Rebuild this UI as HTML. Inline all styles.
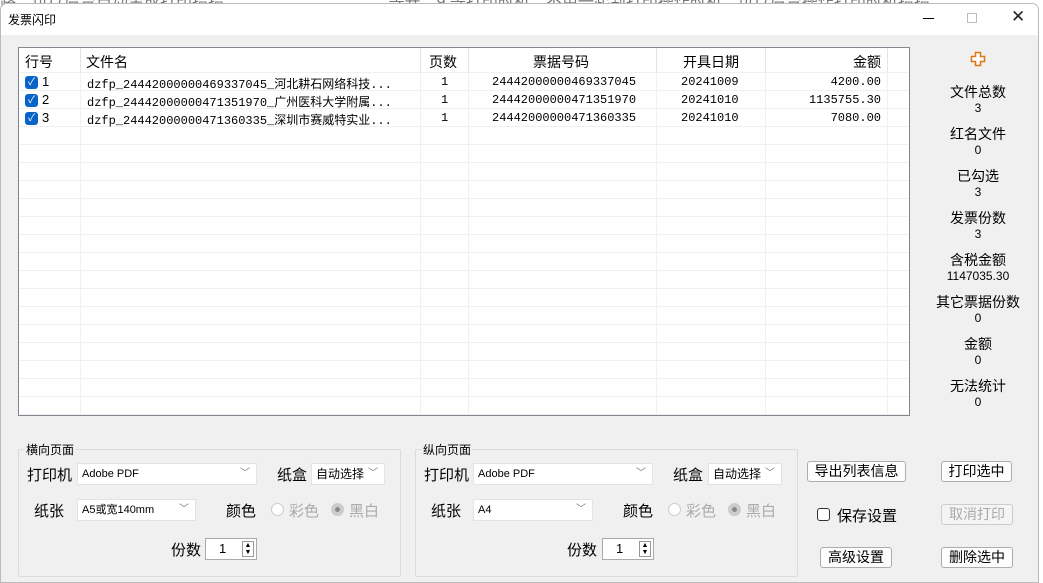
<!DOCTYPE html>
<html><head><meta charset="utf-8"><style>
*{margin:0;padding:0;box-sizing:border-box}
body{width:1043px;height:578px;background:#fff;font-family:"Liberation Sans","Noto Sans CJK SC",sans-serif;font-size:14px;color:#000;position:relative;overflow:hidden}
.a{position:absolute;white-space:nowrap}
#win{position:absolute;left:0;top:3px;width:1039px;height:580px;background:#f0f0f0;border:1px solid #bbb;border-radius:7px 7px 0 0;overflow:hidden}
#tb{position:absolute;left:0;top:0;width:100%;height:31px;background:#fff}
#tbl{position:absolute;left:17px;top:43px;width:892px;height:369px;background:#fff;border:1px solid #828790;overflow:hidden}
.vl{position:absolute;top:0;bottom:0;width:1px;background:#f0f0f0}
.hl{position:absolute;left:0;right:0;height:1px;background:#f0f0f0}
.m{font-family:"Liberation Mono","Noto Sans CJK SC",monospace;font-size:12px}
.cb{position:absolute;width:13px;height:13px;background:#0a64c8;border-radius:3px;color:#fff;font-size:10px;line-height:13px;text-align:center}
.grp{position:absolute;border:1px solid #dcdcdc;border-radius:2px}
.gt{position:absolute;top:-9px;left:6px;background:#f0f0f0;font-size:12px;padding:0 1px}
.combo{position:absolute;height:22px;background:#fff;border:1px solid #e3e3e3;font-size:11px;line-height:20px;padding-left:4px}
.combo .ar{position:absolute;right:6px;top:0;color:#777;font-size:10px}
.btn{position:absolute;height:21px;background:#fdfdfd;border:1px solid #adadad;border-radius:3px;text-align:center;line-height:19px;font-size:14px}
.st{position:absolute;left:930px;width:94px;text-align:center;font-size:14px;line-height:17px}
.st div{font-size:12px;line-height:14px}
</style></head><body>
<div class="a" style="left:0;top:-12px;color:#777;font-size:16px">路，可以后台自动生成打印指指&nbsp;&nbsp;&nbsp;&nbsp;&nbsp;&nbsp;&nbsp;&nbsp;&nbsp;&nbsp;&nbsp;&nbsp;&nbsp;&nbsp;&nbsp;&nbsp;&nbsp;&nbsp;&nbsp;&nbsp;&nbsp;&nbsp;&nbsp;&nbsp;&nbsp;&nbsp;&nbsp;&nbsp;&nbsp;&nbsp;&nbsp;&nbsp;&nbsp;&nbsp;&nbsp;&nbsp;&nbsp;等开，9 等打印时机，不用一起到打印操作时机，可以后台操作打印时机指指</div>
<div id="win">
<div id="tb">
<div class="a" style="left:7px;top:7px;font-size:12px">发票闪印</div>
<div class="a" style="left:922px;top:14px;width:11px;height:1px;background:#000"></div>
<div class="a" style="left:966px;top:9px;width:10px;height:10px;border:1px solid #bbb"></div>
<div class="a" style="left:1010px;top:3px;font-size:17px;color:#222">✕</div>
</div>
<div id="tbl">
<div class="vl" style="left:61px"></div><div class="vl" style="left:401px"></div><div class="vl" style="left:449px"></div><div class="vl" style="left:637px"></div><div class="vl" style="left:746px"></div><div class="vl" style="left:868px"></div>
<div class="hl" style="top:24px"></div><div class="hl" style="top:42px"></div><div class="hl" style="top:60px"></div><div class="hl" style="top:78px"></div><div class="hl" style="top:96px"></div><div class="hl" style="top:114px"></div><div class="hl" style="top:132px"></div><div class="hl" style="top:150px"></div><div class="hl" style="top:168px"></div><div class="hl" style="top:186px"></div><div class="hl" style="top:204px"></div><div class="hl" style="top:222px"></div><div class="hl" style="top:240px"></div><div class="hl" style="top:258px"></div><div class="hl" style="top:276px"></div><div class="hl" style="top:294px"></div><div class="hl" style="top:312px"></div><div class="hl" style="top:330px"></div><div class="hl" style="top:348px"></div><div class="hl" style="top:366px"></div>
<div class="a" style="left:0;top:0;width:100%;height:24px;background:#fff"></div>
<div class="vl" style="left:61px;height:24px;background:#e5e5e5"></div><div class="vl" style="left:401px;height:24px;background:#e5e5e5"></div><div class="vl" style="left:449px;height:24px;background:#e5e5e5"></div><div class="vl" style="left:637px;height:24px;background:#e5e5e5"></div><div class="vl" style="left:746px;height:24px;background:#e5e5e5"></div><div class="vl" style="left:868px;height:24px;background:#e5e5e5"></div>
<div class="a" style="left:6px;top:4px">行号</div>
<div class="a" style="left:67px;top:4px">文件名</div>
<div class="a" style="left:410px;top:4px">页数</div>
<div class="a" style="left:514px;top:4px">票据号码</div>
<div class="a" style="left:664px;top:4px">开具日期</div>
<div class="a" style="left:834px;top:4px">金额</div>
<div class="cb" style="left:6px;top:28px">✓</div><div class="a" style="left:23px;top:26px;font-size:13px">1</div>
<div class="cb" style="left:6px;top:46px">✓</div><div class="a" style="left:23px;top:44px;font-size:13px">2</div>
<div class="cb" style="left:6px;top:64px">✓</div><div class="a" style="left:23px;top:62px;font-size:13px">3</div>
<div class="a m" style="left:68px;top:27px">dzfp_24442000000469337045_河北耕石网络科技...</div>
<div class="a m" style="left:68px;top:45px">dzfp_24442000000471351970_广州医科大学附属...</div>
<div class="a m" style="left:68px;top:63px">dzfp_24442000000471360335_深圳市赛威特实业...</div>
<div class="a m" style="left:422px;top:27px">1</div><div class="a m" style="left:422px;top:45px">1</div><div class="a m" style="left:422px;top:63px">1</div>
<div class="a m" style="left:473px;top:27px">24442000000469337045</div>
<div class="a m" style="left:473px;top:45px">24442000000471351970</div>
<div class="a m" style="left:473px;top:63px">24442000000471360335</div>
<div class="a m" style="left:662px;top:27px">20241009</div><div class="a m" style="left:662px;top:45px">20241010</div><div class="a m" style="left:662px;top:63px">20241010</div>
<div class="a m" style="right:28px;top:27px">4200.00</div><div class="a m" style="right:28px;top:45px">1135755.30</div><div class="a m" style="right:28px;top:63px">7080.00</div>
</div>
<svg class="a" style="left:969px;top:47px" width="16" height="16" viewBox="0 0 16 16"><path d="M5.5 1.5h5v4h4v5h-4v4h-5v-4h-4v-5h4z" fill="#fff" stroke="#e07810" stroke-width="1.6"/></svg>
<div class="st" style="top:80px">文件总数<div>3</div></div>
<div class="st" style="top:122px">红名文件<div>0</div></div>
<div class="st" style="top:164px">已勾选<div>3</div></div>
<div class="st" style="top:206px">发票份数<div>3</div></div>
<div class="st" style="top:248px">含税金额<div>1147035.30</div></div>
<div class="st" style="top:290px">其它票据份数<div>0</div></div>
<div class="st" style="top:332px">金额<div>0</div></div>
<div class="st" style="top:374px">无法统计<div>0</div></div>

<div class="grp" style="left:17px;top:445px;width:383px;height:128px"><span class="gt">横向页面</span></div>
<div class="a" style="left:26px;top:460px;font-size:15px">打印机</div>
<div class="combo" style="left:76px;top:459px;width:180px">Adobe PDF<span class="ar">﹀</span></div>
<div class="a" style="left:276px;top:460px;font-size:15px">纸盒</div>
<div class="combo" style="left:310px;top:459px;width:74px;font-size:12px">自动选择<span class="ar">﹀</span></div>
<div class="a" style="left:33px;top:496px;font-size:15px">纸张</div>
<div class="combo" style="left:76px;top:495px;width:119px">A5或宽140mm<span class="ar">﹀</span></div>
<div class="a" style="left:225px;top:496px;font-size:15px">颜色</div>
<div class="a" style="left:270px;top:499px;width:13px;height:13px;border:1px solid #ccc;border-radius:50%;background:#fff"></div><div class="a" style="left:288px;top:496px;font-size:15px;color:#aaa">彩色</div>
<div class="a" style="left:330px;top:499px;width:13px;height:13px;border:4px solid #ccc;border-radius:50%;background:#888"></div><div class="a" style="left:348px;top:496px;font-size:15px;color:#aaa">黑白</div>
<div class="a" style="left:170px;top:535px;font-size:15px">份数</div>
<div class="a" style="left:204px;top:534px;width:52px;height:22px;background:#fff;border:1px solid #aaa;font-size:13px;padding:2px 0 0 13px">1<div class="a" style="left:36px;top:2px;width:12px;height:16px;border:1px solid #999;font-size:7px;line-height:7px;text-align:center">▲<br>▼</div></div>

<div class="grp" style="left:414px;top:445px;width:383px;height:128px"><span class="gt">纵向页面</span></div>
<div class="a" style="left:423px;top:460px;font-size:15px">打印机</div>
<div class="combo" style="left:472px;top:459px;width:180px">Adobe PDF<span class="ar">﹀</span></div>
<div class="a" style="left:672px;top:460px;font-size:15px">纸盒</div>
<div class="combo" style="left:707px;top:459px;width:74px;font-size:12px">自动选择<span class="ar">﹀</span></div>
<div class="a" style="left:430px;top:496px;font-size:15px">纸张</div>
<div class="combo" style="left:472px;top:495px;width:120px">A4<span class="ar">﹀</span></div>
<div class="a" style="left:622px;top:496px;font-size:15px">颜色</div>
<div class="a" style="left:667px;top:499px;width:13px;height:13px;border:1px solid #ccc;border-radius:50%;background:#fff"></div><div class="a" style="left:685px;top:496px;font-size:15px;color:#aaa">彩色</div>
<div class="a" style="left:727px;top:499px;width:13px;height:13px;border:4px solid #ccc;border-radius:50%;background:#888"></div><div class="a" style="left:745px;top:496px;font-size:15px;color:#aaa">黑白</div>
<div class="a" style="left:566px;top:535px;font-size:15px">份数</div>
<div class="a" style="left:601px;top:534px;width:52px;height:22px;background:#fff;border:1px solid #aaa;font-size:13px;padding:2px 0 0 13px">1<div class="a" style="left:36px;top:2px;width:12px;height:16px;border:1px solid #999;font-size:7px;line-height:7px;text-align:center">▲<br>▼</div></div>

<div class="btn" style="left:806px;top:457px;width:99px">导出列表信息</div>
<div class="btn" style="left:940px;top:457px;width:71px">打印选中</div>
<div class="a" style="left:816px;top:504px;width:13px;height:13px;border:1px solid #333;border-radius:3px;background:#fff"></div>
<div class="a" style="left:836px;top:501px;font-size:15px">保存设置</div>
<div class="btn" style="left:940px;top:500px;width:72px;color:#aaa;border-color:#ccc;background:#f4f4f4">取消打印</div>
<div class="btn" style="left:819px;top:543px;width:72px">高级设置</div>
<div class="btn" style="left:940px;top:543px;width:72px">删除选中</div>
</div>
</body></html>
